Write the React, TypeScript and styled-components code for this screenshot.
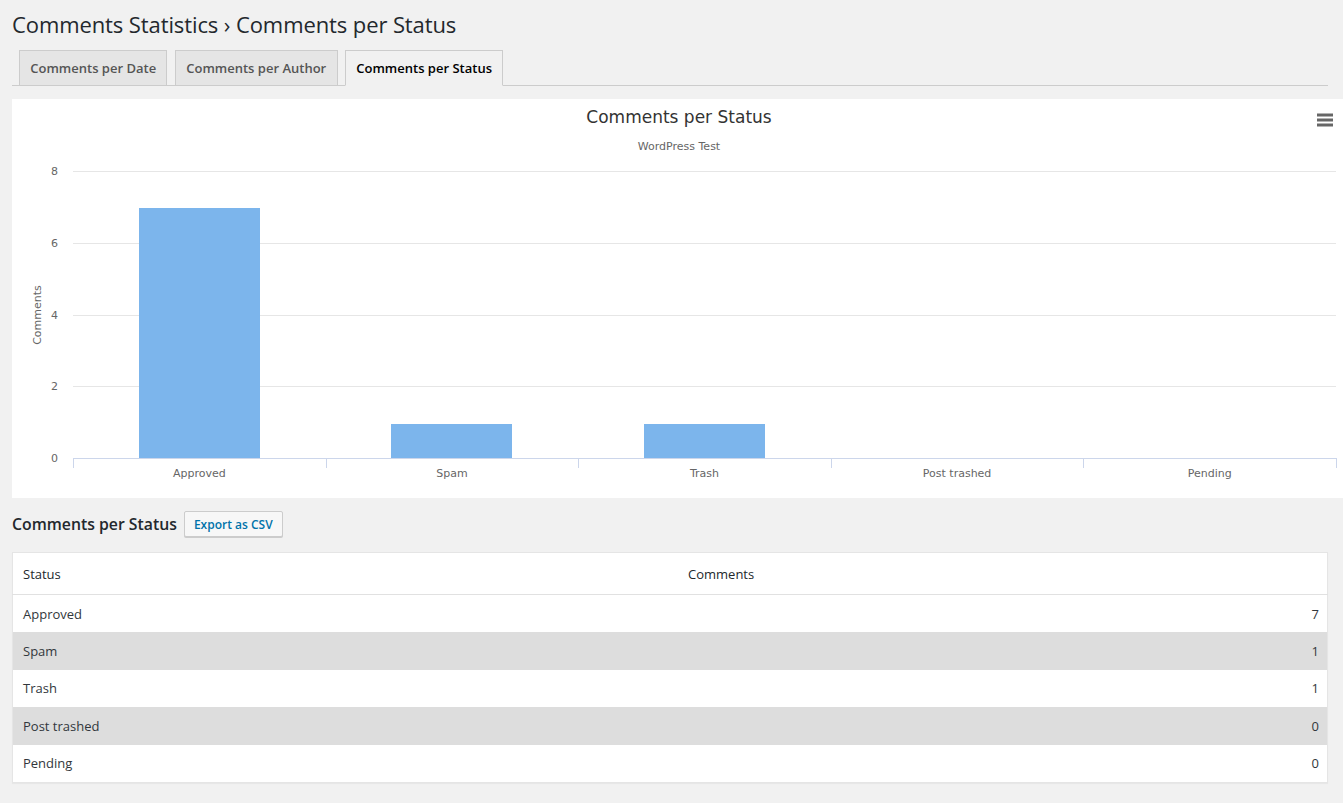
import React from "react";
import styled, { createGlobalStyle } from "styled-components";

const GlobalStyle = createGlobalStyle`
  html, body {
    margin: 0;
    padding: 0;
    background: #f1f1f1;
    overflow: hidden;
  }
  body {
    font-family: "Open Sans", "Noto Sans", sans-serif;
    color: #23282d;
  }
`;

const Wrap = styled.div`
  padding: 8px 15px 20px 12px;
  width: 1316px;
`;

const PageTitle = styled.h1`
  margin: 0;
  font-size: 22px;
  font-weight: 400;
  line-height: 32px;
  letter-spacing: -0.1px;
  color: #23282d;
`;

const TabBar = styled.nav`
  display: flex;
  gap: 7.5px;
  margin-top: 10px;
  padding-left: 7px;
  border-bottom: 1px solid #ccc;
  height: 35px;
  align-items: flex-end;
`;

const Tab = styled.a<{ $active?: boolean }>`
  display: block;
  box-sizing: border-box;
  height: 36px;
  margin-bottom: -1px;
  padding: 0 10.3px;
  border: 1px solid #ccc;
  border-bottom-color: ${(p) => (p.$active ? "#f1f1f1" : "#ccc")};
  background: ${(p) => (p.$active ? "#f1f1f1" : "#e5e5e5")};
  color: ${(p) => (p.$active ? "#000" : "#555")};
  font-size: 13px;
  font-weight: 600;
  line-height: 34px;
  text-decoration: none;
  white-space: nowrap;
`;

const ChartBox = styled.div`
  margin-top: 13px;
  width: 1331px;
  height: 399px;
  background: #fff;
`;

const SectionHead = styled.div`
  display: flex;
  align-items: center;
  gap: 7px;
  margin-top: 12px;
  height: 28px;
`;

const SectionTitle = styled.h2`
  margin: 0;
  font-size: 15.8px;
  font-weight: 600;
  color: #23282d;
`;

const Button = styled.button`
  box-sizing: border-box;
  height: 26px;
  padding: 0 9px;
  border: 1px solid #ccc;
  border-radius: 2px;
  background: #f7f7f7;
  box-shadow: 0 1px 0 #ccc;
  color: #0073aa;
  font-family: inherit;
  font-size: 12px;
  font-weight: 600;
  cursor: pointer;
`;

const Table = styled.table`
  margin-top: 14px;
  width: 1316px;
  border-collapse: collapse;
  background: #fff;
  border: 1px solid #e5e5e5;
  box-shadow: 0 1px 1px rgba(0, 0, 0, 0.04);
  font-size: 13px;
  color: #32373c;
`;

const HeadCell = styled.th<{ $w?: string }>`
  height: 41px;
  padding: 0 10px;
  text-align: left;
  font-weight: 400;
  font-size: 13px;
  color: #23282d;
  border-bottom: 1px solid #e1e1e1;
  width: ${(p) => p.$w || "auto"};
`;

const Row = styled.tr<{ $alt?: boolean }>`
  height: 37.6px;
  background: ${(p) => (p.$alt ? "#dddddd" : "#fff")};
`;

const Cell = styled.td<{ $num?: boolean }>`
  padding: ${(p) => (p.$num ? "0 8px 0 10px" : "0 10px")};
  text-align: ${(p) => (p.$num ? "right" : "left")};
  color: #32373c;
`;

const rows = [
  { status: "Approved", count: 7 },
  { status: "Spam", count: 1 },
  { status: "Trash", count: 1 },
  { status: "Post trashed", count: 0 },
  { status: "Pending", count: 0 },
];

const chartFont = `"DejaVu Sans", Verdana, sans-serif`;

function StatusChart() {
  const W = 1331;
  const H = 399;
  const left = 61;
  const right = 1324;
  const top = 72;
  const bottom = 359;
  const max = 8;
  const plotH = bottom - top;
  const catW = (right - left) / rows.length;
  const barW = 121;
  const yOf = (v: number) => bottom - (v / max) * plotH;
  const ticks = [0, 2, 4, 6, 8];

  return (
    <svg width={W} height={H} viewBox={`0 0 ${W} ${H}`}>
      <text
        x={667}
        y={24}
        textAnchor="middle"
        fontFamily={chartFont}
        fontSize={17}
        fill="#333"
      >
        Comments per Status
      </text>
      <text
        x={667}
        y={51}
        textAnchor="middle"
        fontFamily={chartFont}
        fontSize={11}
        fill="#666"
      >
        WordPress Test
      </text>

      {/* context menu */}
      <g stroke="#666" strokeWidth={3} strokeLinecap="butt">
        <line x1={1305} y1={16} x2={1321} y2={16} />
        <line x1={1305} y1={21} x2={1321} y2={21} />
        <line x1={1305} y1={26} x2={1321} y2={26} />
      </g>

      {ticks.map((t) =>
        t === 0 ? null : (
          <line
            key={`g${t}`}
            x1={left}
            x2={right}
            y1={Math.round(yOf(t)) + 0.5}
            y2={Math.round(yOf(t)) + 0.5}
            stroke="#e6e6e6"
          />
        )
      )}
      {ticks.map((t) => (
        <text
          key={`l${t}`}
          x={46}
          y={Math.round(yOf(t)) + 4}
          textAnchor="end"
          fontFamily={chartFont}
          fontSize={11}
          fill="#666"
        >
          {t}
        </text>
      ))}
      <text
        transform={`translate(29 216) rotate(-90)`}
        textAnchor="middle"
        fontFamily={chartFont}
        fontSize={11}
        fill="#666"
      >
        Comments
      </text>

      {rows.map((r, i) => {
        const cx = left + catW * (i + 0.5);
        const y = Math.round(yOf(r.count) + 1.4);
        return (
          <g key={r.status}>
            {r.count > 0 && (
              <rect
                x={Math.round(cx - barW / 2)}
                y={y}
                width={barW}
                height={bottom - y}
                fill="#7cb5ec"
              />
            )}
            <text
              x={cx}
              y={378}
              textAnchor="middle"
              fontFamily={chartFont}
              fontSize={11}
              fill="#666"
            >
              {r.status}
            </text>
          </g>
        );
      })}

      <line x1={left} x2={right} y1={359.5} y2={359.5} stroke="#ccd6eb" />
      {Array.from({ length: rows.length + 1 }).map((_, i) => {
        const x = Math.round(left + catW * i) + 0.5;
        return (
          <line key={`t${i}`} x1={x} x2={x} y1={359} y2={369} stroke="#ccd6eb" />
        );
      })}
    </svg>
  );
}

export default function App() {
  return (
    <>
      <GlobalStyle />
      <Wrap>
        <PageTitle>Comments Statistics › Comments per Status</PageTitle>
        <TabBar>
          <Tab href="#">Comments per Date</Tab>
          <Tab href="#">Comments per Author</Tab>
          <Tab href="#" $active>
            Comments per Status
          </Tab>
        </TabBar>
        <ChartBox>
          <StatusChart />
        </ChartBox>
        <SectionHead>
          <SectionTitle>Comments per Status</SectionTitle>
          <Button>Export as CSV</Button>
        </SectionHead>
        <Table>
          <thead>
            <tr>
              <HeadCell $w="645px">Status</HeadCell>
              <HeadCell>Comments</HeadCell>
            </tr>
          </thead>
          <tbody>
            {rows.map((r, i) => (
              <Row key={r.status} $alt={i % 2 === 1}>
                <Cell>{r.status}</Cell>
                <Cell $num>{r.count}</Cell>
              </Row>
            ))}
          </tbody>
        </Table>
      </Wrap>
    </>
  );
}
